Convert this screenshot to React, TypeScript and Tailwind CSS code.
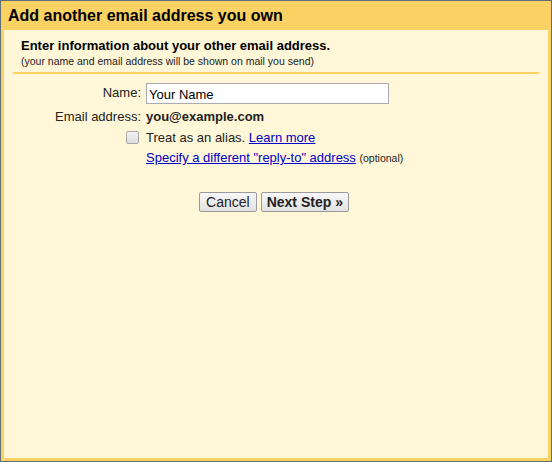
import React from "react";

const font = { fontFamily: '"Liberation Sans", Arial, sans-serif' };

const App = () => {
  return (
    <div
      className="w-[552px] h-[462px] border border-[#616d79] bg-[#fad163] flex flex-col px-[3px] pb-[3px] text-[#222]"
      style={font}
    >
      <div className="h-[29px] pl-[4px] pt-[6px] text-[16px] leading-[18px] font-bold text-black">
        Add another email address you own
      </div>

      <div className="flex-1 bg-[#fff7d7]">
        <div className="mx-[9px] pt-[8px]">
          <div className="pl-[8px]">
            <div className="text-[13px] leading-[15px] font-bold text-black">
              Enter information about your other email address.
            </div>
            <div className="mt-[2px] text-[10.5px] leading-[12px]">
              (your name and email address will be shown on mail you send)
            </div>
          </div>
          <div className="mt-[5px] h-[2px] bg-[#fad163]" />
        </div>

        {/* form rows */}
        <div className="mt-[9px] flex flex-col text-[13px] leading-[15px]">
          <div className="flex items-start gap-[5px]">
            <label className="w-[137px] text-right mt-[2px]">Name:</label>
            <input
              defaultValue="Your Name"
              className="w-[243px] h-[21px] border border-[#a9abb0] bg-white px-[2px] pt-[2px] text-[13px] text-black outline-none"
              style={font}
            />
          </div>

          <div className="mt-[5px] flex items-start gap-[5px]">
            <div className="w-[137px] text-right">Email address:</div>
            <div className="font-bold">you@example.com</div>
          </div>

          <div className="mt-[6px] flex items-start gap-[5px]">
            <div className="w-[137px] flex justify-end pt-[1px]">
              <span className="mr-[2px] w-[13px] h-[13px] rounded-[2px] border border-[#a8a8a8] bg-gradient-to-b from-[#f4f4f4] to-[#dcdcdc]" />
            </div>
            <div>
              Treat as an alias.{" "}
              <a href="#" className="text-[#0000cc] underline">
                Learn more
              </a>
            </div>
          </div>

          <div className="mt-[5px] flex items-start gap-[5px]">
            <div className="w-[137px]" />
            <div>
              <a href="#" className="text-[#0000cc] underline">
                Specify a different "reply-to" address
              </a>{" "}
              <span className="text-[10.5px]">(optional)</span>
            </div>
          </div>
        </div>

        <div className="mt-[26px] flex justify-center gap-[4px] pr-[4px]">
          <button
            className="h-[20px] px-[6px] rounded-[2px] border border-[#9a9a9a] bg-gradient-to-b from-[#f8f8f8] to-[#e2e2e2] text-[14px] leading-[16px] text-[#222]"
            style={font}
          >
            Cancel
          </button>
          <button
            className="h-[20px] px-[5px] rounded-[2px] border border-[#9a9a9a] bg-gradient-to-b from-[#f8f8f8] to-[#e2e2e2] text-[14px] leading-[16px] font-bold text-[#222]"
            style={font}
          >
            Next Step »
          </button>
        </div>
      </div>
    </div>
  );
};

export default App;
